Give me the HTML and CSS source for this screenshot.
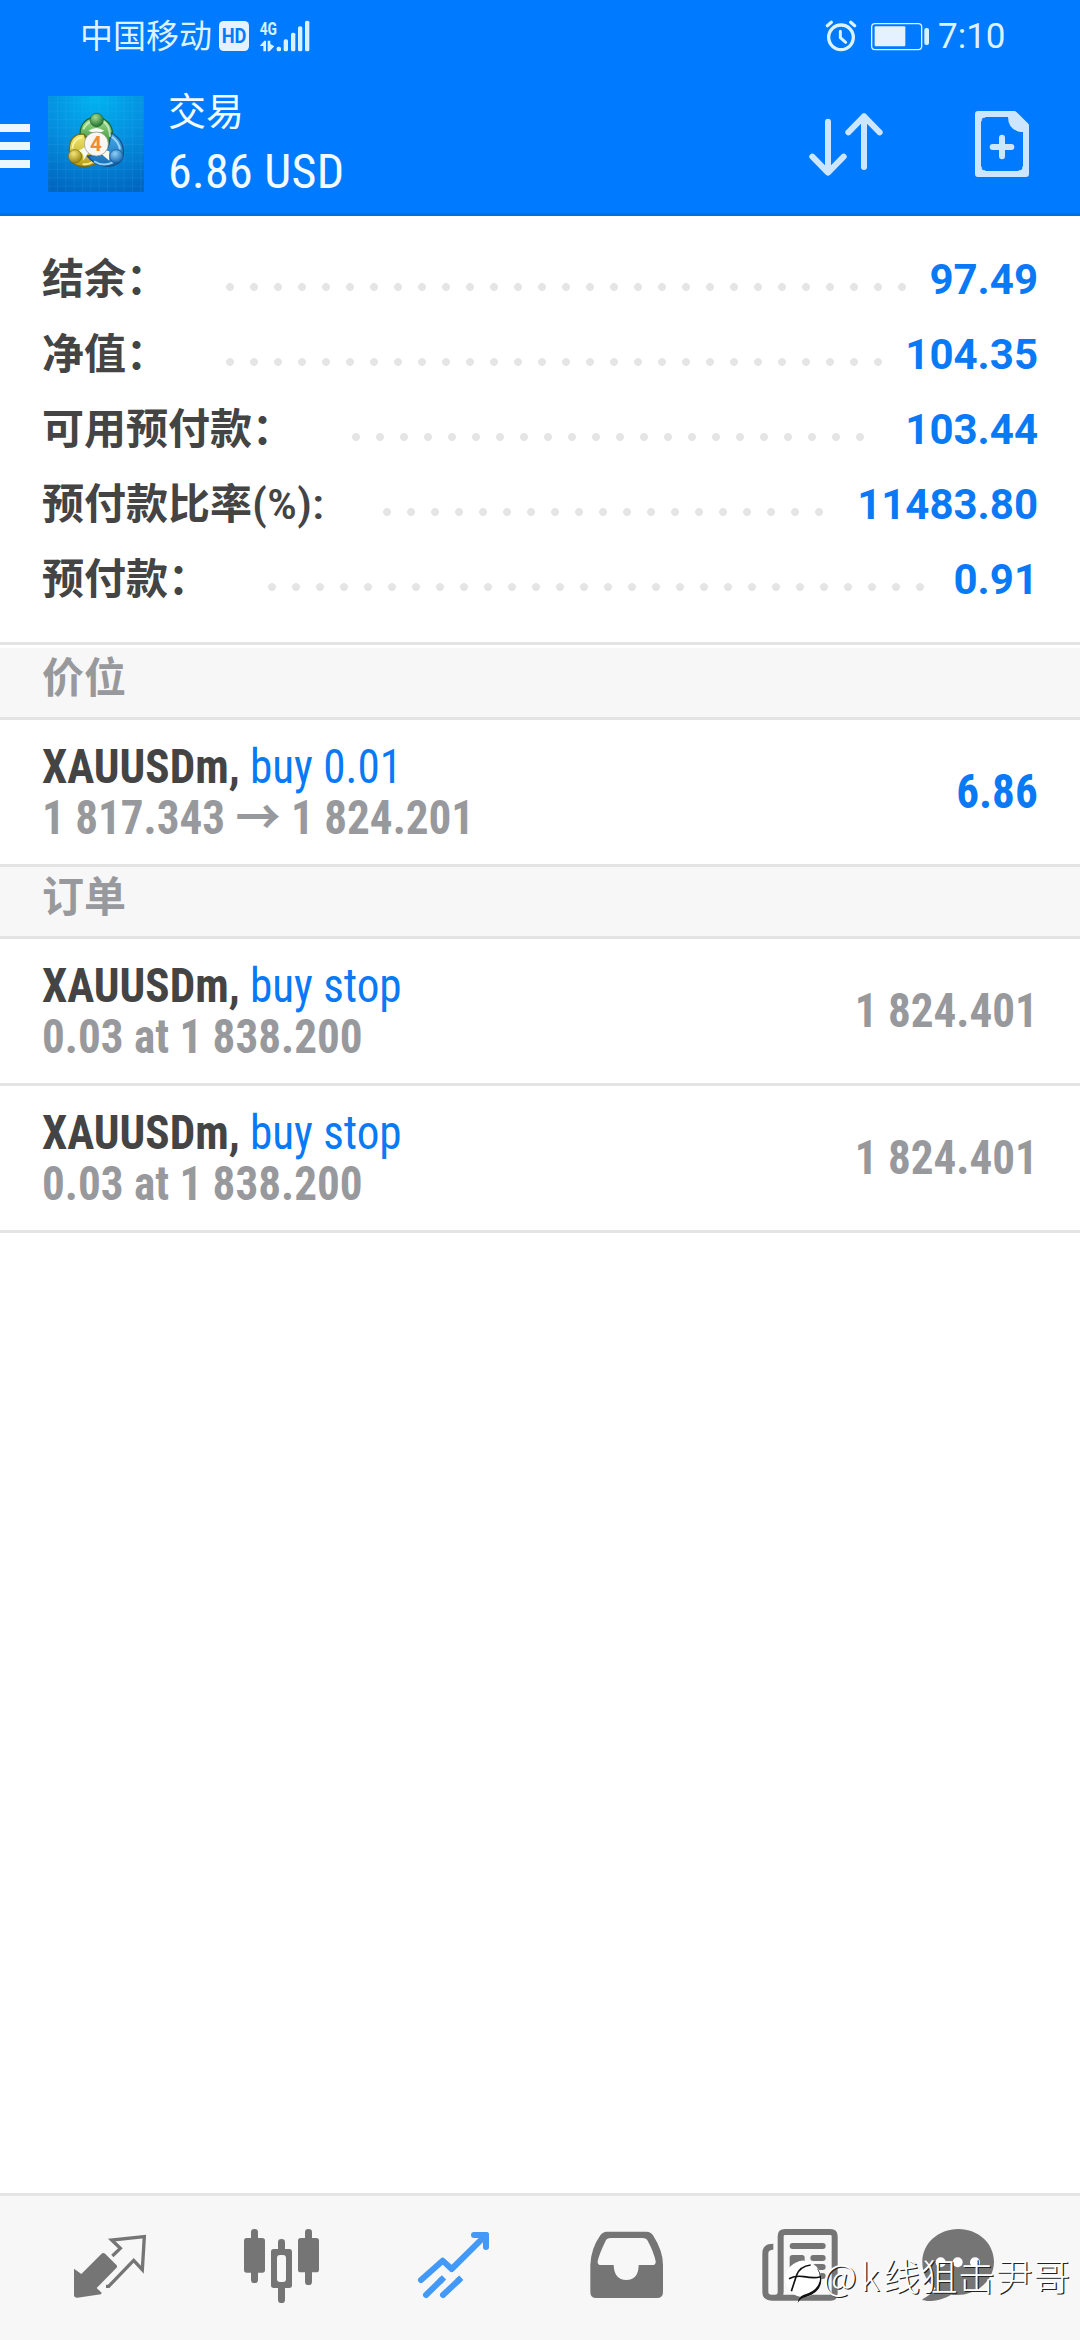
FILE: index.html
```html
<!DOCTYPE html>
<html lang="zh-CN">
<head>
<meta charset="utf-8">
<title>交易</title>
<link rel="stylesheet" href="styles.css">
</head>
<body>
<div class="screen">
  <header class="header">
    <div class="status">
      <span class="carrier">中国移动</span>
      <svg class="signal" viewBox="654 54 282 108">
        <rect x="657" y="63" width="90" height="90" rx="14" fill="#e4f1ff"/>
        <text x="702" y="130" text-anchor="middle" textLength="74" lengthAdjust="spacingAndGlyphs" class="hd-text">HD</text>
        <text x="779" y="104" textLength="52" lengthAdjust="spacingAndGlyphs" class="net-text">4G</text>
        <g fill="#d9f1ff">
          <path d="M779 138 L793 122 H798 V154 H790 V138Z M803 122 H811 V132 L823 139 L809 154 H803Z"/>
          <rect x="830" y="140" width="13" height="14" rx="5"/>
          <rect x="851" y="118" width="13" height="36" rx="5"/>
          <rect x="873" y="98" width="13" height="56" rx="5"/>
          <rect x="894" y="79" width="13" height="75" rx="5"/>
          <rect x="915" y="62" width="13" height="92" rx="5"/>
        </g>
      </svg>
      <svg class="power" viewBox="192 54 321 108" fill="none" stroke="#dcf3ff">
        <circle cx="243" cy="112" r="37" stroke-width="10"/>
        <path d="M241 94 V113 L257 127" stroke-width="9" stroke-linecap="round" stroke-linejoin="round"/>
        <path d="M202 77 L214 67 M284 77 L272 67" stroke-width="10" stroke-linecap="round"/>
        <rect x="335" y="71" width="150" height="78" rx="10" stroke-width="4"/>
        <rect x="344" y="79" width="92" height="60" rx="3" fill="#e4f1ff" stroke="none"/>
        <rect x="493" y="84" width="14" height="51" rx="6" fill="#d9f1ff" stroke="none"/>
      </svg>
      <span class="clock">7:10</span>
    </div>
    <div class="toolbar">
      <div class="menu"><i></i><i></i><i></i></div>
      <svg class="logo" viewBox="0 0 288 288">
        <defs>
          <radialGradient id="sky" cx=".5" cy="0" r="1.05">
            <stop offset="0" stop-color="#00b4f0"/><stop offset=".5" stop-color="#0590e0"/><stop offset="1" stop-color="#0066c0"/>
          </radialGradient>
          <pattern id="grid" width="25" height="25" patternUnits="userSpaceOnUse" x="2" y="19">
            <path d="M0 0H25M0 0V25" stroke="#5cc4f5" stroke-opacity=".3" stroke-width="2"/>
          </pattern>
          <linearGradient id="green" x1="0" y1="0" x2="0" y2="1"><stop offset="0" stop-color="#a5dc8c"/><stop offset="1" stop-color="#258a35"/></linearGradient>
          <linearGradient id="yellow" x1="0" y1="0" x2="0" y2="1"><stop offset="0" stop-color="#f2ea70"/><stop offset="1" stop-color="#b99d12"/></linearGradient>
          <linearGradient id="blue" x1="0" y1="0" x2="0" y2="1"><stop offset="0" stop-color="#49abe8"/><stop offset="1" stop-color="#126eb8"/></linearGradient>
          <radialGradient id="greenHead" cx=".4" cy=".3" r=".7"><stop offset="0" stop-color="#a5da8f"/><stop offset="1" stop-color="#217433"/></radialGradient>
          <radialGradient id="yellowHead" cx=".4" cy=".3" r=".7"><stop offset="0" stop-color="#f3e879"/><stop offset="1" stop-color="#9b8310"/></radialGradient>
          <radialGradient id="blueHead" cx=".4" cy=".3" r=".7"><stop offset="0" stop-color="#8fd0f6"/><stop offset="1" stop-color="#1568b0"/></radialGradient>
        </defs>
        <rect width="288" height="288" fill="url(#sky)"/>
        <rect width="288" height="288" fill="url(#grid)"/>
        <g stroke-width="4">
          <path d="M98 126C90 90 112 70 130 66H160C184 76 202 98 190 142L160 152L105 116Z" fill="url(#green)" stroke="#196b35"/>
          <path d="M109 115C82 110 62 130 64 164L68 192C80 212 110 218 142 204L124 165Z" fill="url(#yellow)" stroke="#766a1c"/>
          <path d="M190 111C218 126 228 148 226 176L218 196C190 222 142 212 118 180L168 176L182 148Z" fill="url(#blue)" stroke="#174f84"/>
        </g>
        <path d="M106 100Q116 80 132 76M166 76Q186 90 186 122" fill="none" stroke="#d5f1c7" stroke-width="6" stroke-opacity=".8"/>
        <path d="M73 158Q76 128 103 124M104 204Q122 207 133 198" fill="none" stroke="#fff8ad" stroke-width="6" stroke-opacity=".8"/>
        <path d="M192 122Q214 140 216 160M138 196Q165 213 194 199" fill="none" stroke="#b6e4ff" stroke-width="6" stroke-opacity=".8"/>
        <path d="M121 104Q145 88 169 104L160 108H130ZM92 164L112 152L122 168L106 194Q110 172 92 164Z M184 166L170 162L160 174L184 194Z" fill="#f4fbf0"/>
        <circle cx="146" cy="72" r="20" fill="url(#greenHead)" stroke="#1b602f" stroke-width="2"/>
        <circle cx="81" cy="181" r="20" fill="url(#yellowHead)" stroke="#7c6b16" stroke-width="2"/>
        <circle cx="205" cy="181" r="20" fill="url(#blueHead)" stroke="#175692" stroke-width="2"/>
        <circle cx="145" cy="144" r="36" fill="#f8f7f5" stroke="#8e8e80" stroke-width="2"/>
        <text x="144" y="166" text-anchor="middle" class="logo-text">4</text>
      </svg>
      <div class="titles">
        <div class="title">交易</div>
        <div class="amount">6.86 USD</div>
      </div>
      <svg class="sort" viewBox="144 324 228 210" fill="none" stroke="#cce6ff" stroke-width="18" stroke-linecap="round" stroke-linejoin="round">
        <path d="M204 362V514M157 467L204 515L251 467"/>
        <path d="M312 498V346M265 394L312 346L359 394"/>
      </svg>
      <svg class="new-order" viewBox="642 330 168 204">
        <path d="M654 342H763L798 377V522H654Z" fill="none" stroke="#cce6ff" stroke-width="18" stroke-linejoin="round"/>
        <path d="M744 342H766L800 378V396H782Q744 390 744 350Z" fill="#cce6ff"/>
        <path d="M663 364V351H676Q663 351 663 364M663 500V513H676Q663 513 663 500M789 500V513H776Q789 513 789 500" fill="#cce6ff" stroke="#cce6ff" stroke-width="3"/>
        <path d="M726 413V469M698 441H754" stroke="#cce6ff" stroke-width="18" stroke-linecap="round"/>
      </svg>
    </div>
  </header>

  <section class="account">
    <div class="line"><span class="label">结余：</span><span class="dots" style="width:696px"></span><span class="value">97.49</span></div>
    <div class="line"><span class="label">净值：</span><span class="dots" style="width:672px"></span><span class="value">104.35</span></div>
    <div class="line"><span class="label">可用预付款：</span><span class="dots" style="width:528px"></span><span class="value">103.44</span></div>
    <div class="line"><span class="label">预付款比率<span class="unit">(%):</span></span><span class="dots" style="width:456px"></span><span class="value">11483.80</span></div>
    <div class="line"><span class="label">预付款：</span><span class="dots" style="width:672px"></span><span class="value">0.91</span></div>
  </section>

  <h2 class="section first">价位</h2>
  <div class="item">
    <div class="info">
      <div><b class="symbol">XAUUSDm,</b> <span class="side">buy 0.01</span></div>
      <div class="detail">1 817.343 → 1 824.201</div>
    </div>
    <div class="price profit">6.86</div>
  </div>
  <h2 class="section">订单</h2>
  <div class="item">
    <div class="info">
      <div><b class="symbol">XAUUSDm,</b> <span class="side">buy stop</span></div>
      <div class="detail">0.03 at 1 838.200</div>
    </div>
    <div class="price">1 824.401</div>
  </div>
  <div class="item">
    <div class="info">
      <div><b class="symbol">XAUUSDm,</b> <span class="side">buy stop</span></div>
      <div class="detail">0.03 at 1 838.200</div>
    </div>
    <div class="price">1 824.401</div>
  </div>

  <nav class="tabs">
    <svg viewBox="72 48 516 432" fill="#757575">
      <path d="M222 266L244 282L304 222Q310 216 316 222L350 256Q353 260 349 264L290 324L305 338L303 343L232 353Q222 353 222 345Z"/>
      <path d="M337 228L361 205L335 180L433 170L427 269L401 241L326 319H318" fill="none" stroke="#757575" stroke-width="10"/>
    </svg>
    <svg viewBox="588 48 516 432" fill="#757575">
      <rect x="732" y="174" width="63" height="104" rx="8"/><rect x="753" y="147" width="21" height="162" rx="10"/>
      <rect x="894" y="174" width="63" height="103" rx="8"/><rect x="915" y="147" width="21" height="168" rx="10"/>
      <rect x="834" y="177" width="21" height="192" rx="10"/><rect x="813" y="207" width="63" height="117" rx="8"/>
      <rect x="831" y="225" width="27" height="81" rx="9" fill="#f7f7f7"/>
    </svg>
    <svg viewBox="24 48 516 432" fill="none" stroke="#4399f7" stroke-width="18" stroke-linecap="round" stroke-linejoin="round">
      <path d="M183 300L248 242L275 267L376 167M342 165H378V201"/>
      <path d="M362 165H378V181Z" fill="#4399f7"/>
      <path d="M198 345L244 300M249 345L297 300"/>
      <path d="M240 304L252 292M292 304L304 293" stroke-linecap="butt"/>
    </svg>
    <svg viewBox="540 48 516 432" fill="#757575">
      <path fill-rule="evenodd" d="M740 155H860Q872 155 879 166Q909 213 909 255V336Q909 354 891 354H709Q691 354 691 336V255Q693 205 721 166Q729 155 740 155ZM752 174Q741 174 737 182Q717 223 713 244Q712 255 723 255H761Q762 299 799 300Q836 299 836 255H877Q888 255 887 244Q881 215 863 182Q859 174 847 174Z"/>
    </svg>
    <svg viewBox="-24 48 516 432" fill="none" stroke="#757575" stroke-width="18">
      <path d="M160 200Q136 200 136 220V336Q136 353 155 353H332Q344 353 344 338V169Q344 156 331 156H195Q182 156 182 169V336Q182 353 165 353"/>
      <path d="M218 198H308M280 234H308M280 261H308M218 288H308" stroke-linecap="round"/>
      <rect x="209" y="225" width="45" height="46" rx="8" fill="#757575" stroke="none"/>
    </svg>
    <svg viewBox="492 48 516 432" fill="#757575">
      <path d="M715 147C655 147 607 190 607 246C607 281 622 307 647 325C636 340 623 350 608 357C605 362 614 363 623 363C649 363 674 356 693 344C766 353 822 303 822 246C822 190 775 147 715 147Z"/>
      <g fill="#fff"><circle cx="662" cy="247" r="15"/><circle cx="713" cy="247" r="15"/><circle cx="765" cy="247" r="15"/></g>
    </svg>
  </nav>

  <div class="watermark">
    <svg viewBox="195 234 114 138">
      <circle cx="250" cy="297" r="54" fill="#fff"/>
      <path d="M232 247Q250 235 264 248L260 262H229Z" fill="#fff"/>
      <path d="M207 296Q227 286 252 290Q285 296 302 290M214 334Q222 309 230 285Q240 259 272 255" fill="none" stroke="#111" stroke-width="5"/>
      <path d="M290 263Q303 282 299 304Q291 334 250 345Q235 352 233 369Q241 353 260 350Q305 336 304 297Q302 275 290 263Z" fill="#111"/>
    </svg>
    <span class="mark"><span class="latin">@k</span>线狙击尹哥</span>
  </div>
</div>
</body>
</html>
```
FILE: styles.css
```css
* { box-sizing: border-box; }
body {
  margin: 0;
  background: #fff;
  font-family: Roboto, "Noto Sans CJK SC", sans-serif;
}
svg { display: block; flex: none; }
.screen {
  position: relative;
  display: flex;
  flex-direction: column;
  width: 1080px;
  height: 2340px;
  overflow: hidden;
  background: #fff;
}

.header {
  height: 216px;
  flex: none;
  background: #007aff;
  border-bottom: 3px solid #006fe3;
}
.status {
  display: flex;
  height: 74px;
  padding: 0 75px 0 80px;
  align-items: center;
  color: #dcf3ff;
}
.carrier { width: 138px; font-size: 33px; line-height: 74px; white-space: nowrap; }
.signal { width: 94px; height: 36px; margin-top: -2px; }
.power { width: 107px; height: 36px; margin: -2px 7px 0 auto; }
.clock { width: 67px; font-size: 35px; line-height: 74px; }
.hd-text { font: 700 62px Roboto, sans-serif; fill: #007aff; }
.net-text { font: 700 56px Roboto, sans-serif; fill: #d9f1ff; }

.toolbar { display: flex; align-items: center; height: 139px; padding-right: 50px; }
.menu { display: flex; flex-direction: column; gap: 10px; width: 48px; margin-top: 5px; }
.menu i { width: 30px; height: 8px; background: #ebf6ff; }
.logo { width: 96px; height: 96px; margin-top: 1px; }
.logo-text { font: 700 62px Roboto, sans-serif; fill: #f08c35; }
.titles { padding-left: 24px; color: #f2fbff; }
.title { font-size: 38px; line-height: 54px; padding-bottom: 2px; }
.amount { font-size: 48px; line-height: 62px; font-stretch: 75%; letter-spacing: .3px; white-space: nowrap; }
.sort { width: 76px; height: 70px; margin-left: auto; }
.new-order { width: 56px; height: 68px; margin-left: 90px; }

.account { padding: 26px 42px 25px 42px; flex: none; }
.line { display: flex; height: 75px; line-height: 75px; font-size: 42px; font-weight: 700; }
.label { color: #444; white-space: nowrap; }
.unit {
  display: inline-block;
  width: 73px;
  font-weight: 500;
  font-stretch: 75%;
  transform: scaleX(1.12);
  transform-origin: left;
}
.dots {
  height: 8px;
  margin: 41px auto 0 50px;
  background: radial-gradient(circle at 12px 4px, #e5e5e5 3.6px, transparent 4.2px) 0 0 / 24px 8px repeat-x;
}
.value { color: #0a79f5; }

.section {
  flex: none;
  height: 72px;
  margin: 0;
  padding-left: 42px;
  font-size: 42px;
  line-height: 61px;
  font-weight: 700;
  color: #98999d;
  background: #f7f7f7;
  border-bottom: 3px solid #e4e4e4;
}
.section.first {
  height: 78px;
  border-top: 3px solid #e4e4e4;
  padding-top: 3px;
  background: linear-gradient(#fff 3px, #f7f7f7 3px);
}
.item {
  display: flex;
  flex: none;
  justify-content: space-between;
  align-items: center;
  height: 147px;
  padding: 0 42px;
  border-bottom: 3px solid #e4e4e4;
  font-size: 48px;
  line-height: 51px;
  font-stretch: 75%;
  white-space: nowrap;
}
.info { transform: scaleX(.94); transform-origin: left; }
.price { transform: scaleX(.94); transform-origin: right; padding-bottom: 2px; }
.symbol { font-weight: 700; color: #444; }
.side { color: #0a79f5; }
.detail, .price { font-weight: 700; color: #98999d; }
.price.profit { color: #0a79f5; }

.tabs {
  display: flex;
  flex: none;
  height: 147px;
  margin-top: auto;
  padding: 0 24px;
  border-top: 3px solid #e4e4e4;
  background: #f7f7f7;
}
.tabs svg { width: 172px; height: 144px; }

.watermark {
  position: absolute;
  left: 785px;
  top: 2258px;
  display: flex;
  white-space: nowrap;
}
.watermark svg { width: 38px; height: 46px; }
.mark {
  margin-top: -5px;
  font: 300 37px/44px "Noto Sans CJK SC", sans-serif;
  letter-spacing: .5px;
  color: #fff;
  text-shadow: 1.3px 1.3px 0 #222;
}
.latin { letter-spacing: 3.5px; }
```
